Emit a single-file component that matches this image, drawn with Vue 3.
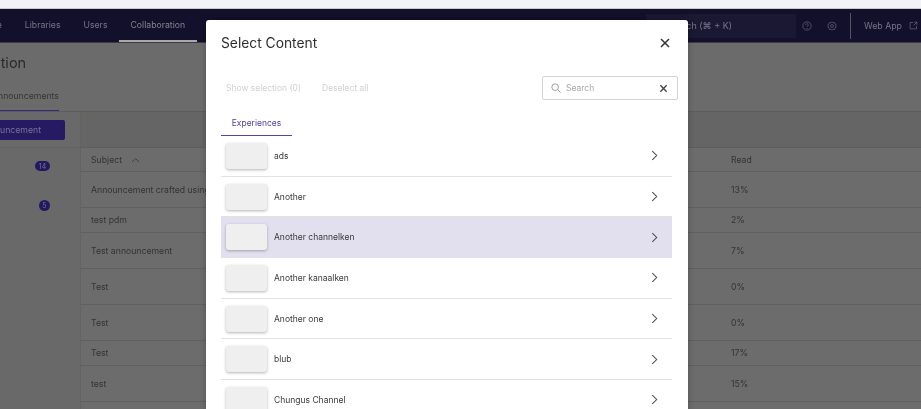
<script setup>
const navItems = ['Home', 'Libraries', 'Users', 'Collaboration']

const announcements = [
  { subject: 'Announcement crafted using the editor', read: '13%', size: 'tall' },
  { subject: 'test pdm', read: '2%', size: 'short' },
  { subject: 'Test announcement', read: '7%', size: 'tall' },
  { subject: 'Test', read: '0%', size: 'tall' },
  { subject: 'Test', read: '0%', size: 'tall' },
  { subject: 'Test', read: '17%', size: 'short' },
  { subject: 'test', read: '15%', size: 'tall' }
]

const channels = [
  { name: 'ads' },
  { name: 'Another' },
  { name: 'Another channelken', active: true },
  { name: 'Another kanaalken' },
  { name: 'Another one' },
  { name: 'blub' },
  { name: 'Chungus Channel' }
]
</script>

<template>
  <div class="page">
    <div class="browser-strip"></div>

    <header class="topbar">
      <nav class="nav">
        <a v-for="item in navItems" :key="item" class="nav-item" :class="{ current: item === 'Collaboration' }">{{ item }}</a>
      </nav>
      <div class="topbar-right">
        <div class="global-search">Search (⌘ + K)</div>
        <svg class="top-icon help" viewBox="0 0 24 24" fill="none" stroke="currentColor" stroke-width="1.6">
          <circle cx="12" cy="12" r="10"/>
          <path d="M9 9.5a3 3 0 1 1 4.6 2.5c-1 .7-1.6 1.3-1.6 2.5"/>
          <circle cx="12" cy="18" r=".6"/>
        </svg>
        <svg class="top-icon gear" viewBox="0 0 24 24" fill="none" stroke="currentColor" stroke-width="1.6">
          <path d="M12 2l2.6 2.2 3.4-.4 1 3.3 3 1.7-1.3 3.2 1.3 3.2-3 1.7-1 3.3-3.4-.4L12 22l-2.6-2.2-3.4.4-1-3.3-3-1.7L3.300 12 2 8.800l3-1.700 1-3.300 3.400.4z"/>
          <circle cx="12" cy="12" r="3.500"/>
        </svg>
        <span class="divider"></span>
        <span class="web-app">Web App</span>
        <svg class="top-icon external" viewBox="0 0 24 24" fill="none" stroke="currentColor" stroke-width="1.8">
          <path d="M11 4H3v17h17v-8"/>
          <path d="M14 3h7v7"/>
          <path d="M21 3l-9 9"/>
        </svg>
      </div>
    </header>

    <div class="page-head">
      <h1 class="page-title">Collaboration</h1>
      <div class="page-tabs">
        <span class="page-tab">Announcements</span>
      </div>
    </div>

    <div class="content">
      <aside class="side">
        <div class="side-toolbar">
          <button class="create-btn">New announcement</button>
        </div>
        <div class="side-item first"><span class="badge wide">14</span></div>
        <div class="side-item"><span class="badge">5</span></div>
      </aside>

      <section class="table">
        <div class="table-toolbar"></div>
        <div class="row head">
          <span class="subject">
            Subject
            <svg class="sort" viewBox="0 0 12 8" fill="none" stroke="currentColor" stroke-width="1.100">
              <path d="M1.500 6.500L6 2l4.500 4.500"/>
            </svg>
          </span>
          <span class="read">Read</span>
        </div>
        <div v-for="(row, i) in announcements" :key="i" class="row" :class="row.size">
          <span class="subject">{{ row.subject }}</span>
          <span class="read">{{ row.read }}</span>
        </div>
      </section>
    </div>

    <div class="modal">
      <div class="modal-head">
        <h2 class="modal-title">Select Content</h2>
        <svg class="modal-close" viewBox="0 0 10 10" fill="none" stroke="currentColor" stroke-width="1.500">
          <path d="M1 1l8 8M9 1l-8 8"/>
        </svg>
      </div>

      <div class="modal-actions">
        <div class="selection">
          <span>Show selection (0)</span>
          <span>Deselect all</span>
        </div>
        <div class="search-box">
          <svg class="search-icon" viewBox="0 0 12 12" fill="none" stroke="currentColor" stroke-width="1">
            <circle cx="5" cy="5" r="4"/>
            <path d="M8 8l3.500 3.500"/>
          </svg>
          <span class="search-text">Search</span>
          <svg class="search-clear" viewBox="0 0 10 10" fill="none" stroke="currentColor" stroke-width="1.500">
            <path d="M1.500 1.500l7 7M8.500 1.500l-7 7"/>
          </svg>
        </div>
      </div>

      <div class="modal-tabs">
        <span class="modal-tab">Experiences</span>
      </div>

      <ul class="channels">
        <li v-for="channel in channels" :key="channel.name" class="channel" :class="{ active: channel.active }">
          <span class="thumb"></span>
          <span class="channel-name">{{ channel.name }}</span>
          <svg class="chevron" viewBox="0 0 8 12" fill="none" stroke="currentColor" stroke-width="1.200">
            <path d="M1.500 1l5 5-5 5"/>
          </svg>
        </li>
      </ul>
    </div>
  </div>
</template>

<style scoped>
.page {
  position: relative;
  width: 921px;
  height: 409px;
  overflow: hidden;
  background: #6b6b6b;
  font-family: 'Inter', 'Liberation Sans', sans-serif;
  color: #2b2b2b;
  filter: blur(0.35px);
}

.browser-strip {
  height: 8px;
  background: #f2f3f6;
  border-bottom: 1px solid #c9c9d2;
}

/* barra de cima */
.topbar {
  display: flex;
  justify-content: space-between;
  height: 33px;
  background: #12102b;
  color: #777687;
  font-size: 8.700px;
  border-bottom: 1px solid #3c3c40;
  box-sizing: content-box;
}

.nav {
  display: flex;
  margin-left: -34px;
}

.nav-item {
  display: flex;
  align-items: center;
  padding: 0 11.500px;
  height: 31px;
  border-bottom: 2px solid transparent;
  white-space: nowrap;
}

.nav-item.current {
  border-bottom-color: #a9a9ad;
  color: #85848f;
}

.topbar-right {
  display: flex;
  align-items: center;
  height: 33px;
}

.global-search {
  width: 150px;
  height: 24px;
  line-height: 24px;
  padding-left: 21px;
  box-sizing: border-box;
  background: #1a1832;
  margin-right: 6px;
  font-size: 9px;
  white-space: nowrap;
}

.top-icon {
  width: 10px;
  height: 10px;
  color: #6e6d7a;
}

.gear {
  margin-left: 15px;
}

.divider {
  width: 1px;
  height: 26px;
  background: #55545f;
  margin-left: 13px;
}

.web-app {
  margin-left: 13px;
  font-size: 8.800px;
  white-space: nowrap;
}

.external {
  width: 9px;
  height: 9px;
  margin: 0 3px 0 7px;
}

/* cabecalho da pagina */
.page-head {
  height: 69px;
  padding-top: 10px;
  box-sizing: border-box;
  border-bottom: 1px solid #5c5c5c;
}

.page-title {
  margin: 0 0 0 -65px;
  font-size: 14.500px;
  font-weight: 400;
  line-height: 20px;
  color: #2a2a2a;
  white-space: nowrap;
}

.page-tabs {
  display: flex;
  margin-top: 8px;
  margin-left: -8px;
}

.page-tab {
  padding: 8px 0 7px;
  line-height: 14px;
  font-size: 8.700px;
  color: #363636;
  width: 67px;
  border-bottom: 1px solid #33297a;
  white-space: nowrap;
}

.content {
  display: flex;
}

.side {
  width: 81px;
  flex-shrink: 0;
  height: 300px;
  background: #696969;
  border-right: 1px solid #636363;
  box-sizing: border-box;
}

.side-toolbar {
  height: 36px;
  padding-top: 8px;
  box-sizing: border-box;
  border-bottom: 1px solid #626262;
}

.create-btn {
  display: block;
  width: 126px;
  height: 20px;
  margin-left: -61px;
  border: 0;
  border-radius: 2px;
  background: #261a62;
  color: #77749a;
  font-family: inherit;
  font-size: 8.700px;
  white-space: nowrap;
  text-align: right;
  padding: 0 24px 0 0;
}

.side-item {
  display: flex;
  justify-content: flex-end;
  height: 43px;
  align-items: center;
  padding-right: 30px;
}

.side-item.first {
  height: 36px;
}

.badge {
  display: flex;
  justify-content: center;
  align-items: center;
  min-width: 11px;
  height: 11px;
  border-radius: 6px;
  background: #221a5e;
  color: #75738e;
  font-size: 7px;
}

.badge.wide {
  min-width: 15px;
  height: 10px;
}

.table {
  flex: 1;
  background: #6c6c6c;
}

.table-toolbar {
  height: 36px;
  background: #656565;
  border-bottom: 1px solid #5e5e5e;
  box-sizing: border-box;
}

.row {
  display: flex;
  align-items: center;
  padding-left: 10px;
  box-sizing: border-box;
  border-bottom: 1px solid #606060;
  font-size: 8.700px;
  color: #333;
  white-space: nowrap;
}

.row.head {
  height: 24px;
}

.row.tall {
  height: 36px;
}

.row.short {
  height: 25px;
}

.subject {
  display: flex;
  align-items: center;
  width: 640px;
  flex-shrink: 0;
}

.sort {
  width: 9px;
  height: 6px;
  margin-left: 9px;
}

/* modal */
.modal {
  position: absolute;
  left: 206px;
  top: 20px;
  width: 482px;
  height: 420px;
  padding: 0 15px;
  box-sizing: border-box;
  background: #fff;
  border-radius: 3px 3px 0 0;
  box-shadow: 0 0 6px rgba(0, 0, 0, 0.25);
}

.modal-head {
  display: flex;
  align-items: center;
  justify-content: space-between;
  height: 46px;
  padding-right: 3px;
}

.modal-title {
  margin: 0;
  font-size: 13.800px;
  font-weight: 400;
  color: #2f2f2f;
}

.modal-close {
  width: 10px;
  height: 10px;
  color: #333;
}

.modal-actions {
  display: flex;
  align-items: center;
  justify-content: space-between;
  height: 24px;
  margin-top: 10px;
  margin-right: -5px;
}

.selection {
  display: flex;
  gap: 21px;
  padding-left: 5px;
  font-size: 8.500px;
  color: #d0d0d0;
}

.search-box {
  display: flex;
  align-items: center;
  width: 136px;
  height: 24px;
  padding: 0 8px;
  box-sizing: border-box;
  border: 1px solid #d4d4d4;
  border-radius: 2px;
}

.search-icon {
  width: 10px;
  height: 10px;
  color: #8a8a8a;
}

.search-text {
  flex: 1;
  margin-left: 5px;
  font-size: 8.500px;
  color: #a8a8a8;
}

.search-clear {
  width: 9px;
  height: 9px;
  margin-right: 1px;
  color: #444;
}

.modal-tabs {
  display: flex;
  margin-top: 12px;
}

.modal-tab {
  width: 71px;
  height: 24px;
  line-height: 23px;
  box-sizing: border-box;
  text-align: center;
  font-size: 8.500px;
  color: #4f3f9f;
  border-bottom: 1px solid #5546a8;
}

.channels {
  list-style: none;
  margin: 0;
  padding: 0;
  width: 451px;
}

.channel {
  display: flex;
  align-items: center;
  height: 40.700px;
  padding: 0 14px 0 5px;
  box-sizing: border-box;
  border-bottom: 1px solid #e2e2e2;
}

.channel.active {
  background: #e2e0ef;
  border-bottom-color: #e2e0ef;
}

.thumb {
  width: 41px;
  height: 26px;
  border-radius: 3px;
  background: #efefef;
  box-shadow: 0 1px 3px rgba(0, 0, 0, 0.3);
  flex-shrink: 0;
}

.channel-name {
  flex: 1;
  margin-left: 7px;
  font-size: 8.500px;
  color: #3a3a3a;
}

.chevron {
  width: 7px;
  height: 11px;
  color: #4a4a4a;
}
</style>

<style>
body {
  margin: 0;
}
</style>
